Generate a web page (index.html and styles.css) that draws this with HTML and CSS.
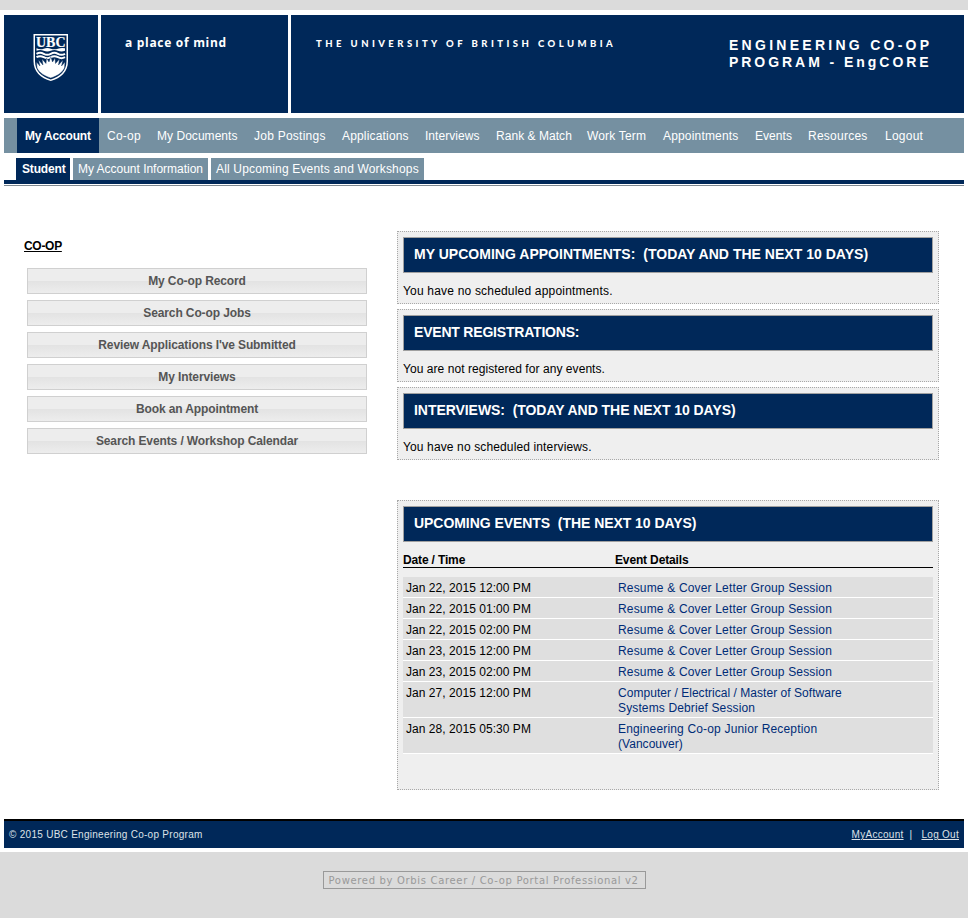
FILE: index.html
```html
<!DOCTYPE html>
<html lang="en">
<head>
<meta charset="utf-8">
<title>Engineering Co-op Program - EngCORE</title>
<link rel="stylesheet" href="styles.css">
</head>
<body>
<div class="page">
  <header class="masthead">
    <div class="crest">
      <svg width="36" height="48" viewBox="0 0 36 48" aria-label="UBC">
        <path d="M.5 0H35V27C35 38 28 44 17.75 47C7.500 44 .5 38 .5 27Z" fill="#fff"/>
        <path d="M2 1.500H33.500V27C33.500 37 27 42.500 17.750 45.500C8.500 42.500 2 37 2 27Z" fill="#002859"/>
        <text x="3" y="13" textLength="29.500" lengthAdjust="spacingAndGlyphs" class="crest-text">UBC</text>
        <path d="M3.500 14.300q3.600 1.600 7.200 .4t7.100 0t7.100 0t7.100-.4v2.500q-3.500 1.400-7.100 0t-7.100 0t-7.100 0t-7.200 0z" fill="#fff"/>
        <path d="M3.500 19.800q3.600-2 7.200 0t7.100 0t7.100 0t7.100 0M3.500 23.200q3.600-2 7.200 0t7.100 0t7.100 0t7.100 0" fill="none" stroke="#fff" stroke-width="2"/>
        <path d="M4 34L3.500 28L7 32L5.500 26L10 31L9 25L13 29.500L13.500 24L16 28L17.750 22.500L19.500 28L22 24L22.500 29.500L26.500 25L25.500 31L30 26L28.500 32L32 28L31.500 34C29 39 24 42 17.750 44C11.500 42 6.500 39 4 34Z" fill="#fff" stroke="#002859" stroke-width=".4"/>
      </svg>
    </div>
    <div class="motto"><span>a place of mind</span></div>
    <div class="banner">
      <div class="university">THE UNIVERSITY OF BRITISH COLUMBIA</div>
      <div class="program"><span class="l1">ENGINEERING CO-OP</span><br><span class="l2">PROGRAM - EngCORE</span></div>
    </div>
  </header>
  <nav class="main-nav">
    <a class="active">My Account</a><a class="wide">Co-op</a><a class="tight">My Documents</a><a class="wide">Job Postings</a><a>Applications</a><a class="tight">Interviews</a><a class="tight">Rank &amp; Match</a><a>Work Term</a><a>Appointments</a><a class="tight">Events</a><a class="wide">Resources</a><a class="wide">Logout</a>
  </nav>
  <nav class="sub-nav">
    <a class="active">Student</a><a class="tight">My Account Information</a><a>All Upcoming Events and Workshops</a>
  </nav>
  <div class="rule"></div>
  <main class="content">
    <section class="links">
      <h2>CO-OP</h2>
      <a class="button">My Co-op Record</a>
      <a class="button">Search Co-op Jobs</a>
      <a class="button">Review Applications I've Submitted</a>
      <a class="button">My Interviews</a>
      <a class="button">Book an Appointment</a>
      <a class="button">Search Events / Workshop Calendar</a>
    </section>
    <section class="panels">
      <div class="panel"><h3 class="long">MY UPCOMING APPOINTMENTS:&nbsp; (TODAY AND THE NEXT 10 DAYS)</h3><p class="long">You have no scheduled appointments.</p></div>
      <div class="panel"><h3 class="short">EVENT REGISTRATIONS:</h3><p>You are not registered for any events.</p></div>
      <div class="panel"><h3>INTERVIEWS:&nbsp; (TODAY AND THE NEXT 10 DAYS)</h3><p class="mid">You have no scheduled interviews.</p></div>
      <div class="panel events">
        <h3>UPCOMING EVENTS&nbsp; (THE NEXT 10 DAYS)</h3>
        <div class="row head"><span>Date / Time</span><span>Event Details</span></div>
        <div class="row"><span>Jan 22, 2015 12:00 PM</span><a>Resume &amp; Cover Letter Group Session</a></div>
        <div class="row"><span>Jan 22, 2015 01:00 PM</span><a>Resume &amp; Cover Letter Group Session</a></div>
        <div class="row"><span>Jan 22, 2015 02:00 PM</span><a>Resume &amp; Cover Letter Group Session</a></div>
        <div class="row"><span>Jan 23, 2015 12:00 PM</span><a>Resume &amp; Cover Letter Group Session</a></div>
        <div class="row"><span>Jan 23, 2015 02:00 PM</span><a>Resume &amp; Cover Letter Group Session</a></div>
        <div class="row"><span>Jan 27, 2015 12:00 PM</span><a><span class="tight">Computer / Electrical / Master of Software</span><br><span class="mid">Systems Debrief Session</span></a></div>
        <div class="row"><span>Jan 28, 2015 05:30 PM</span><a>Engineering Co-op Junior Reception<br><span class="tight">(Vancouver)</span></a></div>
      </div>
    </section>
  </main>
  <footer class="footer">
    <span class="copyright">© 2015 UBC Engineering Co-op Program</span>
    <span class="account"><a>MyAccount</a><i>|</i><a>Log Out</a></span>
  </footer>
</div>
<div class="powered"><span>Powered by Orbis Career / Co-op Portal Professional v2</span></div>
</body>
</html>
```
FILE: styles.css
```css
* { box-sizing: border-box; }
body {
  margin: 0;
  padding-top: 10px;
  height: 918px;
  overflow: hidden;
  background: #dbdbdb;
  font: 12px/15px "Liberation Sans", Arial, sans-serif;
  letter-spacing: .17px;
  color: #000;
}
.tight { letter-spacing: .04px; }
.mid { letter-spacing: .13px; }
.wide { letter-spacing: .25px; }
.page { height: 842px; padding: 5px 4px 4px; background: #fff; }
.masthead { display: grid; grid-template-columns: 94px 187px 673px; gap: 3px; height: 98px; color: #fff; }
.masthead > div { background: #002859; }
.crest { padding: 19px 0 0 29px; }
.crest svg { display: block; }
.crest-text { font: bold 15px "Liberation Serif", serif; fill: #fff; stroke: #fff; stroke-width: .2px; letter-spacing: 0; }
.motto { padding: 20px 0 0 24px; font: bold 12px/16px "Open Sans", sans-serif; letter-spacing: .7px; }
.banner { display: flex; justify-content: space-between; padding: 21px 30px 0 25px; }
.university { font: 900 9.5px/16px Lato, sans-serif; letter-spacing: 3.45px; white-space: nowrap; }
.program { width: 205px; padding-top: 1px; font: bold 14px/17px "Liberation Sans", sans-serif; white-space: nowrap; }
.l1 { letter-spacing: 3.27px; }
.l2 { letter-spacing: 2.95px; }
.main-nav {
  display: grid;
  grid-template-columns: 82px 50px 97px 88px 83px 71px 91px 76px 92px 53px 77px 55px;
  height: 35px;
  margin-top: 5px;
  padding-left: 13px;
  background: #7590a1;
  color: #fff;
  line-height: 36px;
}
.main-nav a { height: 35px; padding-left: 8px; white-space: nowrap; }
.active { background: #002859; font-weight: bold; letter-spacing: -.17px; }
.sub-nav { display: grid; grid-template-columns: 54px 135px 213px; gap: 3px; height: 22px; margin-top: 5px; padding-left: 12px; line-height: 22px; color: #fff; }
.sub-nav a { padding-left: 5px; background: #7590a1; white-space: nowrap; }
.sub-nav .tight { letter-spacing: -.02px; }
.sub-nav .active { padding-left: 6px; background: #002859; }
.rule { height: 6px; border-top: 4px solid #002859; border-bottom: 1px solid #7f8890; }
.content { display: flex; height: 633px; padding-top: 45px; }
.links { width: 393px; padding: 8px 0 0 23px; }
h2 { width: max-content; margin: 0 0 14px -3px; font: bold 12px/15px "Liberation Sans", sans-serif; text-decoration: underline; letter-spacing: -.3px; }
.button {
  display: block;
  width: 340px;
  height: 26px;
  margin-bottom: 6px;
  border: 1px solid #d0d0d0;
  background: linear-gradient(#ededed 0 50%, #e3e3e3 51%, #ededed);
  color: #555;
  font-weight: bold;
  line-height: 24px;
  letter-spacing: -.11px;
  text-align: center;
}
.panel { width: 542px; height: 73px; margin-bottom: 5px; padding: 5px; border: 1px dotted #a8a8a8; background: #efefef; }
h3 { height: 36px; margin: 0; padding-left: 10px; border: 1px solid #a0a0a0; background: #002859; color: #fff; font: bold 14px/33px "Liberation Sans", sans-serif; letter-spacing: -.05px; }
h3.long { letter-spacing: .02px; }
h3.short { letter-spacing: -.2px; }
p { margin: 11px 0 0; letter-spacing: .06px; }
p.long { letter-spacing: .19px; }
.events { height: 290px; margin-top: 40px; }
.row { display: grid; grid-template-columns: 212px 1fr; padding: 4px 3px 1px; border-bottom: 1px solid #fff; background: #dfdfdf; }
.row > span { letter-spacing: .04px; }
.row a { color: #002c77; }
.head { height: 16px; margin: 10px 0 9px; padding: 0; border-bottom: 1px solid #000; background: none; font-weight: bold; line-height: 17px; }
.head > span { letter-spacing: -.15px; }
.footer { display: flex; justify-content: space-between; height: 29px; padding: 0 5px; border-top: 2px solid #000; background: #002859; color: #dde2e8; font-size: 10px; line-height: 27px; letter-spacing: .28px; }
.footer a { text-decoration: underline; }
.footer i { margin: 0 9px 0 6px; font-style: normal; }
.powered { display: flex; justify-content: center; padding-top: 19px; }
.powered span { width: 323px; height: 18px; padding-left: 5px; border: 1px solid #999; color: #999; font: 10px/17px "DejaVu Sans", sans-serif; letter-spacing: .67px; white-space: nowrap; }
```
